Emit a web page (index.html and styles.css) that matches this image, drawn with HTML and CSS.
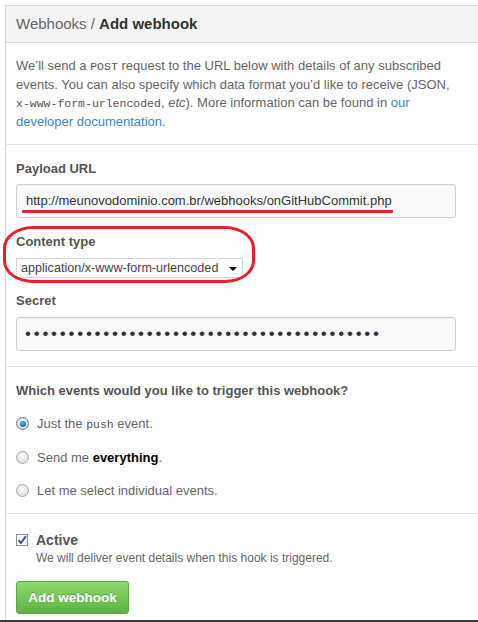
FILE: index.html
```html
<!DOCTYPE html>
<html>
<head>
<meta charset="utf-8">
<link rel="stylesheet" href="styles.css">
</head>
<body>
<div class="page">
  <div class="box">
    <div class="box-header">Webhooks / <strong>Add webhook</strong></div>
    <div class="section intro">
      <p>We’ll send a <code>POST</code> request to the URL below with details of any subscribed events. You can also specify which data format you’d like to receive (JSON, <code>x-www-form-urlencoded</code>, <em>etc</em>). More information can be found in <a href="#">our developer documentation</a>.</p>
    </div>
    <div class="section form">
      <label class="label">Payload URL</label>
      <div class="input url">http://meunovodominio.com.br/webhooks/onGitHubCommit.php<span class="red-line"></span></div>
      <div class="ctype">
        <label class="label">Content type</label>
        <div class="select"><span>application/x-www-form-urlencoded</span><span class="caret"></span></div>
        <span class="red-ring"></span>
      </div>
      <label class="label">Secret</label>
      <div class="input secret">•••••••••••••••••••••••••••••••••••••••••</div>
    </div>
    <div class="section events">
      <div class="label">Which events would you like to trigger this webhook?</div>
      <div class="radio-list">
        <div class="radio-row"><span class="radio checked"></span><span>Just the <code>push</code> event.</span></div>
        <div class="radio-row"><span class="radio"></span><span>Send me <b class="black">everything</b>.</span></div>
        <div class="radio-row"><span class="radio"></span><span>Let me select individual events.</span></div>
      </div>
    </div>
    <div class="section active">
      <div class="check-row"><span class="checkbox"><svg width="10" height="10" viewBox="0 0 10 10"><path d="M1.5 5.2 L4 8 L8.8 1.2" fill="none" stroke="#2b4c8c" stroke-width="1.8"/></svg></span><span class="label">Active</span></div>
      <div class="note">We will deliver event details when this hook is triggered.</div>
      <button class="btn">Add webhook</button>
    </div>
  </div>
  <div class="bottom-bar"></div>
</div>
</body>
</html>
```
FILE: styles.css
```css
html, body {
  margin: 0;
  padding: 0;
  background: #fff;
}
body {
  font-family: "Liberation Sans", Arial, sans-serif;
  font-size: 13px;
  color: #666;
  width: 478px;
  height: 622px;
  overflow: hidden;
}
.page {
  padding: 5px 0 0 5px;
  height: 617px;
  display: flex;
  flex-direction: column;
}
.box {
  border-top: 1px solid #d8d8d8;
  border-left: 1px solid #d8d8d8;
  flex: 1;
}
.box-header {
  height: 36px;
  line-height: 36px;
  background: #f5f5f5;
  border-bottom: 1px solid #d8d8d8;
  padding-left: 10px;
  font-size: 15px;
  color: #666;
}
.box-header strong {
  color: #333;
}
.section {
  padding: 0 22px 0 10px;
  border-bottom: 1px solid #e3e3e3;
}
.intro {
  padding-top: 14px;
  padding-bottom: 13px;
}
.intro p {
  margin: 0;
  line-height: 18px;
}
code {
  font-family: "Liberation Mono", "Courier New", monospace;
  font-size: 11.5px;
  color: #555;
}
a {
  color: #4183c4;
  text-decoration: none;
}
.label {
  display: block;
  font-weight: bold;
  color: #555;
  line-height: 18px;
  font-size: 13px;
}
.form {
  padding-top: 15px;
  padding-bottom: 15px;
}
.input {
  position: relative;
  margin-top: 6px;
  height: 32px;
  line-height: 32px;
  border: 1px solid #d0d0d0;
  border-radius: 3px;
  background: #fafafa;
  padding: 0 9px;
  color: #333;
  box-shadow: inset 0 1px 1px rgba(0,0,0,0.04);
}
.url {
  font-size: 13px;
}
.red-line {
  position: absolute;
  left: 5px;
  top: 25px;
  width: 371px;
  height: 3px;
  background: #e8202a;
  border-radius: 1px;
}
.ctype {
  position: relative;
  margin-top: 15px;
}
.ctype .select {
  margin-top: 7px;
}
.select {
  height: 18px;
  border: 1px solid #d6d6d6;
  background: #fff;
  display: flex;
  align-items: center;
  justify-content: space-between;
  padding-left: 4px;
  box-sizing: content-box;
  width: 221px;
  color: #444;
  font-size: 12.6px;
}
.caret {
  width: 0;
  height: 0;
  border-left: 4px solid transparent;
  border-right: 4px solid transparent;
  border-top: 4px solid #000;
  margin-right: 5px;
  margin-top: 2px;
}
.red-ring {
  position: absolute;
  left: -13px;
  top: -7px;
  width: 246px;
  height: 51px;
  border: 3.5px solid #e8202a;
  border-radius: 30px / 22px;
}
.form .ctype + .label {
  margin-top: 14px;
}
.secret {
  margin-top: 7px;
  font-size: 17px;
  letter-spacing: 2.75px;
  color: #333;
  padding-left: 8px;
}
.events {
  padding-top: 15px;
  padding-bottom: 5px;
}
.radio-list {
  margin-top: 7px;
}
.radio-row {
  display: flex;
  align-items: center;
  gap: 8px;
  height: 33.5px;
  color: #666;
}
.radio {
  width: 11px;
  height: 11px;
  border-radius: 50%;
  border: 1px solid #a3a3a3;
  background: radial-gradient(circle at 50% 35%, #fafafa, #d8d8d8);
  position: relative;
  flex: none;
}
.radio.checked {
  border-color: #5b7da0;
  background: radial-gradient(circle at 50% 35%, #f4f4f4, #cfd8e2);
}
.radio.checked::after {
  content: "";
  position: absolute;
  left: 2.5px;
  top: 2.5px;
  width: 6px;
  height: 6px;
  border-radius: 50%;
  background: radial-gradient(circle at 40% 35%, #5fb0e8, #0a4a8a);
}
.black {
  color: #000;
}
.active {
  border-bottom: none;
  padding-top: 17px;
}
.check-row {
  display: flex;
  align-items: center;
  gap: 8px;
  height: 18px;
}
.checkbox {
  width: 10px;
  height: 10px;
  border: 1px solid #8e8f8f;
  background: linear-gradient(#f0f0f0, #fff);
  display: flex;
  align-items: center;
  justify-content: center;
}
.active .label {
  font-size: 14px;
}
.note {
  font-size: 12px;
  padding-left: 20px;
  line-height: 18px;
}
.btn {
  margin-top: 14px;
  width: 113px;
  height: 33px;
  border: 1px solid #5ca941;
  border-radius: 3px;
  background: linear-gradient(#8add6d, #60b044);
  color: #fff;
  font-family: "Liberation Sans", Arial, sans-serif;
  font-weight: bold;
  font-size: 13.5px;
  text-shadow: 0 -1px 0 rgba(0,0,0,0.25);
  padding: 0;
}
.bottom-bar {
  height: 2px;
  background: #3a3a3a;
  margin-left: -5px;
}
```
